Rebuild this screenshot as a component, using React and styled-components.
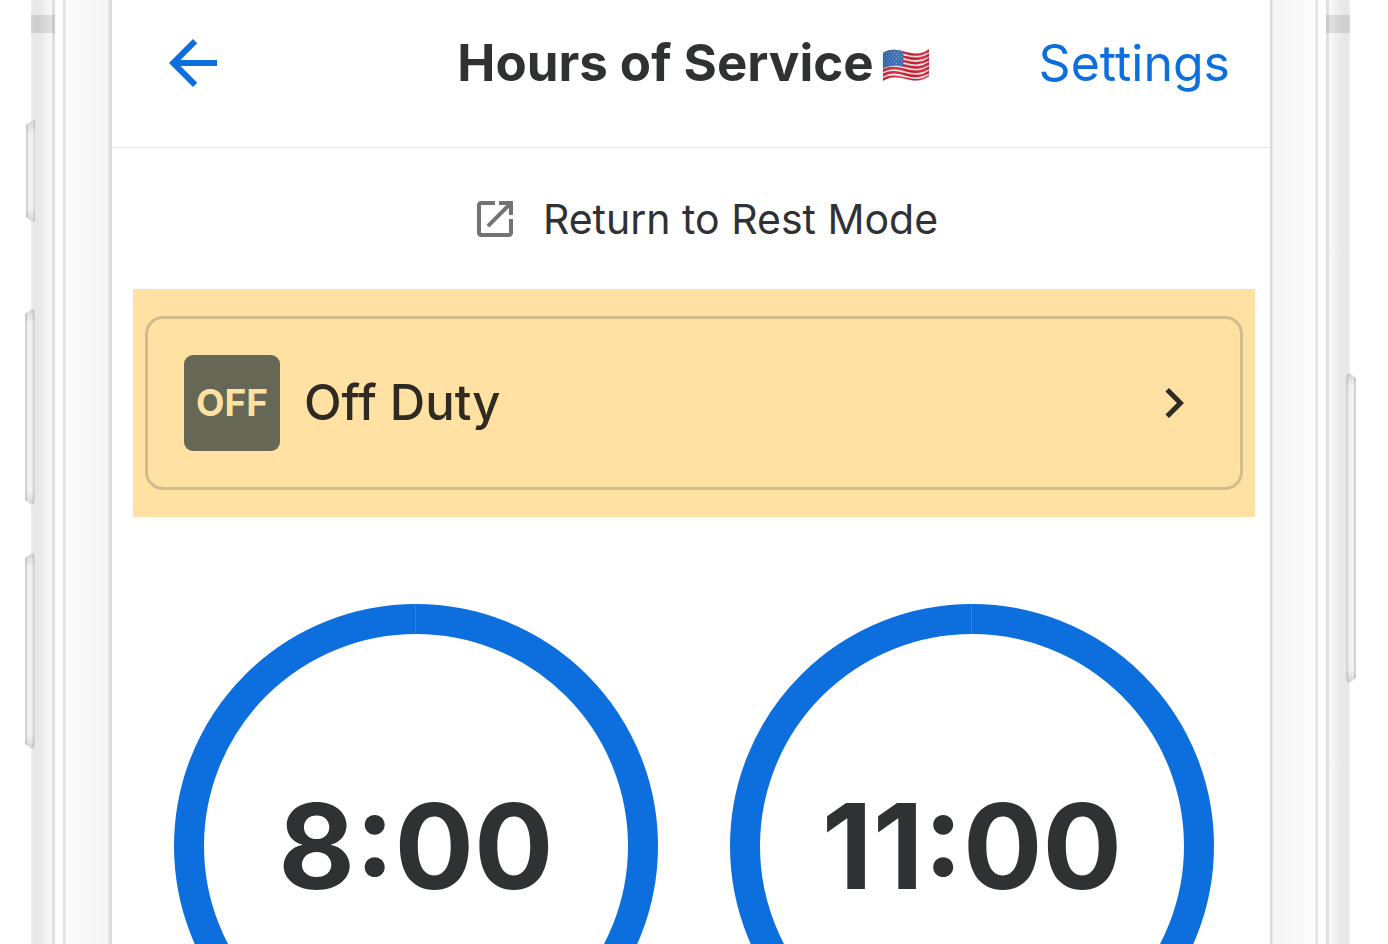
import React from "react";
import styled, { createGlobalStyle } from "styled-components";

const GlobalStyle = createGlobalStyle`
  * { box-sizing: border-box; }
  body {
    margin: 0;
    background: #ffffff;
    color: #303133;
    font-family: Inter, "Liberation Sans", sans-serif;
  }
`;

const Phone = styled.div`
  display: flex;
  height: 100vh;
  padding: 0 38px 0 31px;
  overflow: hidden;
`;

const FrameSide = styled.div`
  position: relative;
  flex: none;
  width: ${(p) => (p.$side === "left" ? 81 : 80)}px;
  background: linear-gradient(
    to ${(p) => (p.$side === "left" ? "right" : "left")},
    #efefef 0,
    #e7e7e7 3px,
    #e8e8e8 8px,
    #f7f7f7 19px,
    #f7f7f7 21px,
    #e0e0e0 21px,
    #e0e0e0 24px,
    #fdfdfd 24px,
    #fdfdfd 32px,
    #e2e2e2 32px,
    #e2e2e2 34px,
    #fcfcfc 35px,
    #f5f5f5 72px,
    #f5f5f5 77px,
    #dcdcdc 78px,
    #dcdcdc 81px
  );
`;

const AntennaBand = styled.div`
  position: absolute;
  top: 15px;
  ${(p) => p.$side}: 0;
  width: 24px;
  height: 18px;
  background: rgba(0, 0, 0, 0.1);
`;

const SideKey = styled.div`
  position: absolute;
  ${(p) => p.$side}: ${(p) => (p.$small ? -5 : -6)}px;
  top: ${(p) => p.$top}px;
  width: ${(p) => (p.$small ? 9 : 10)}px;
  height: ${(p) => p.$height}px;
  background:
    linear-gradient(to bottom, rgba(0, 0, 0, 0.12), transparent 14px, transparent calc(100% - 14px), rgba(0, 0, 0, 0.12)),
    linear-gradient(
      to ${(p) => (p.$side === "left" ? "right" : "left")},
      #d2d2d2 0,
      #dadada 2px,
      #fafafa 3px,
      #f1f1f1 4px,
      #f1f1f1 7px,
      #d8d8d8 8px,
      #d4d4d4 10px
    );
  clip-path: ${(p) =>
    p.$side === "left"
      ? "polygon(0 5px, 7px 0, 9px 1px, 100% 9px, 100% calc(100% - 9px), 9px calc(100% - 1px), 7px 100%, 0 calc(100% - 5px))"
      : "polygon(100% 5px, 3px 0, 1px 1px, 0 9px, 0 calc(100% - 9px), 1px calc(100% - 1px), 3px 100%, 100% calc(100% - 5px))"};
`;

const Screen = styled.main`
  flex: 1;
  min-width: 0;
`;

const Header = styled.header`
  display: grid;
  grid-template-columns: 1fr auto 1fr;
  align-items: center;
  height: 148px;
  padding: 0 40px 21px 45px;
  border-bottom: 1px solid #e5e5e5;
`;

const BackButton = styled.button`
  display: flex;
  justify-self: start;
  padding: 0;
  border: 0;
  background: none;
  color: #0d6fde;
`;

const Title = styled.h1`
  display: flex;
  align-items: center;
  gap: 8px;
  margin: 0;
  font-size: 51px;
  line-height: 60px;
  font-weight: 700;
  white-space: nowrap;
`;

const SettingsLink = styled.a`
  justify-self: end;
  color: #0d6fde;
  font-size: 50px;
  line-height: 60px;
  text-decoration: none;
`;

const Content = styled.div`
  padding: 0 15px 0 21px;
`;

const RestModeLink = styled.a`
  display: flex;
  align-items: center;
  justify-content: center;
  gap: 24px;
  height: 141px;
  padding-left: 21px;
  color: #303133;
  font-size: 41px;
  line-height: 50px;
  text-decoration: none;
  white-space: nowrap;

  svg { color: #727375; }
`;

const Highlight = styled.section`
  padding: 27px 12px;
  background: #ffe1a3;
`;

const StatusButton = styled.button`
  display: flex;
  align-items: center;
  gap: 24px;
  width: 100%;
  height: 174px;
  padding: 0 36px;
  border: 3px solid #d0bd8b;
  border-radius: 18px;
  background: none;
  color: #302b22;
  font-family: inherit;
  font-size: 49px;
  font-weight: 500;
  line-height: 60px;
  text-align: left;

  svg { margin-left: auto; }
`;

const StatusBadge = styled.span`
  display: flex;
  align-items: center;
  justify-content: center;
  width: 96px;
  height: 96px;
  border-radius: 9px;
  background: #666754;
  color: #ffe1a3;
  font-size: 37px;
  font-weight: 700;
`;

const Timers = styled.section`
  display: flex;
  justify-content: center;
  gap: 72px;
  padding-top: 87px;
`;

const Timer = styled.div`
  display: grid;
  place-items: center;
  flex: none;

  > * { grid-area: 1 / 1; }
`;

const TimerValue = styled.span`
  font-size: 118px;
  line-height: 144px;
  font-weight: 700;
`;

function Icon({ size, path }) {
  return (
    <svg width={size} height={size} viewBox="0 0 24 24" fill="currentColor" aria-hidden="true">
      <path d={path} />
    </svg>
  );
}

const ARROW_BACK = "M20 11H7.83l5.59-5.59L12 4l-8 8 8 8 1.41-1.41L7.83 13H20v-2z";
const OPEN_IN_NEW =
  "M19 19H5V5h7V3H5c-1.11 0-2 .9-2 2v14c0 1.1.89 2 2 2h14c1.1 0 2-.9 2-2v-7h-2v7zM14 3v2h3.59l-9.83 9.83 1.41 1.41L19 6.41V10h2V3h-7z";
const CHEVRON = "M10 6L8.59 7.41 13.17 12l-4.58 4.59L10 18l6-6z";

const FLAG = "M1 5C9 0 16 2 24 4S39 7 47 1V28C39 34 32 33 24 31S9 28 1 33Z";

function Flag() {
  const wave = (y) => `M0 ${y + 5}C9 ${y} 16 ${y + 2} 24 ${y + 4}S39 ${y + 7} 48 ${y + 1}`;
  const stars = [];
  for (let row = 0; row < 7; row++) {
    for (let col = 0; col < 6; col++) {
      stars.push(
        <circle key={`${row}-${col}`} cx={2.6 + col * 3.4 + (row % 2) * 1.5} cy={5 + row * 2.2 - col * 0.25} r="0.5" />
      );
    }
  }
  return (
    <svg width="48" height="42" viewBox="0 -6 48 42" role="img" aria-label="United States">
      <defs>
        <clipPath id="flag-shape"><path d={FLAG} /></clipPath>
        <linearGradient id="flag-shade">
          <stop offset="0" stopColor="#000" stopOpacity="0.08" />
          <stop offset="0.3" stopColor="#fff" stopOpacity="0.08" />
          <stop offset="0.65" stopColor="#000" stopOpacity="0.1" />
          <stop offset="0.85" stopColor="#fff" stopOpacity="0.08" />
          <stop offset="1" stopColor="#000" stopOpacity="0.14" />
        </linearGradient>
      </defs>
      <g clipPath="url(#flag-shape)">
        <rect width="48" height="36" fill="#f3eded" />
        {[0, 1, 2, 3, 4, 5, 6].map((n) => (
          <path key={n} d={wave(1 + n * 4.3)} fill="none" stroke="#d61f35" strokeWidth="2.5" />
        ))}
        <path d="M0 0H21.500V19C14 17 8 17 0 21Z" fill="#2f66ac" />
        <g fill="#b4cae6">{stars}</g>
        <rect width="48" height="36" fill="url(#flag-shade)" />
      </g>
      <path d={FLAG} fill="none" stroke="#8b8080" strokeOpacity="0.4" strokeWidth="0.6" />
    </svg>
  );
}

function DutyTimer({ value }) {
  return (
    <Timer>
      <svg width="484" height="484" viewBox="0 0 484 484" aria-hidden="true">
        <circle cx="242" cy="242" r="227" fill="none" stroke="#0d6fde" strokeWidth="30" />
        <path d="M241.500 0V30" stroke="#2a80e2" />
      </svg>
      <TimerValue>{value}</TimerValue>
    </Timer>
  );
}

export default function App() {
  return (
    <>
      <GlobalStyle />
      <Phone>
        <FrameSide $side="left">
          <AntennaBand $side="left" />
          <SideKey $side="left" $top={120} $height={102} $small />
          <SideKey $side="left" $top={309} $height={196} />
          <SideKey $side="left" $top={553} $height={196} />
        </FrameSide>
        <Screen>
          <Header>
            <BackButton type="button" aria-label="Back">
              <Icon size={72} path={ARROW_BACK} />
            </BackButton>
            <Title>
              Hours of Service
              <Flag />
            </Title>
            <SettingsLink href="#settings">Settings</SettingsLink>
          </Header>
          <Content>
            <RestModeLink href="#rest-mode">
              <Icon size={48} path={OPEN_IN_NEW} />
              Return to Rest Mode
            </RestModeLink>
            <Highlight>
              <StatusButton type="button">
                <StatusBadge>OFF</StatusBadge>
                Off Duty
                <Icon size={60} path={CHEVRON} />
              </StatusButton>
            </Highlight>
            <Timers>
              <DutyTimer value="8:00" />
              <DutyTimer value="11:00" />
            </Timers>
          </Content>
        </Screen>
        <FrameSide $side="right">
          <AntennaBand $side="right" />
          <SideKey $side="right" $top={373} $height={310} />
        </FrameSide>
      </Phone>
    </>
  );
}
